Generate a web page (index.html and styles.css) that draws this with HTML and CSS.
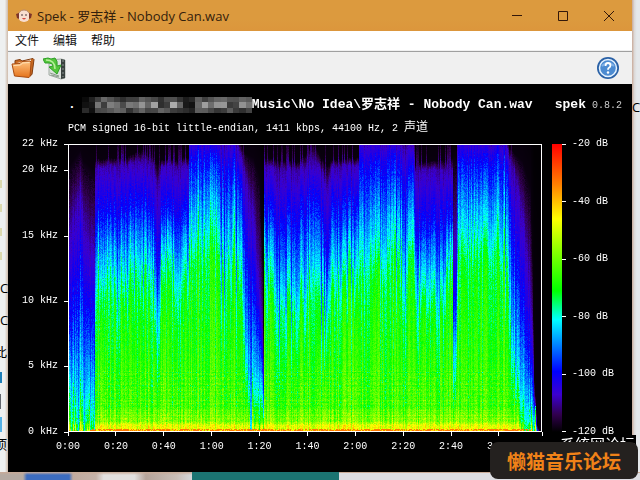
FILE: index.html
```html
<!DOCTYPE html>
<html lang="zh-CN">
<head>
    <meta charset="UTF-8">
    <meta name="viewport" content="width=device-width, initial-scale=1.0">
    <title>Spek - 罗志祥 - Nobody Can.wav</title>
    <link rel="stylesheet" href="styles.css">
</head>
<body>
    <!-- what shows from under the window -->
    <div class="behind behind-left" aria-hidden="true">
        <span class="bit bit-green"></span>
        <span class="bit bit-c">C</span>
        <span class="bit bit-c2">C</span>
        <span class="bit bit-ci">此</span>
        <span class="bit bit-blue"></span>
        <span class="bit bit-gray"></span>
        <span class="bit bit-sky"></span>
        <span class="bit bit-mu">项</span>
    </div>
    <div class="behind behind-right" aria-hidden="true"><span class="bit bit-c3">C</span></div>
    <div class="behind behind-bottom" aria-hidden="true">
        <span class="strip strip-brown"></span>
        <span class="strip strip-teal"></span>
        <span class="strip strip-light"></span>
    </div>

    <main class="window">
        <header class="titlebar">
            <svg class="app-icon" viewBox="0 0 16 16" aria-hidden="true">
                <circle cx="8" cy="8" r="6" fill="#f8ddd0"/>
                <path d="M2 8a6 6 0 0 1 12 0" fill="none" stroke="#b98a70" stroke-width="1"/>
                <path d="M0 6l3-1v6l-2-1zM16 6l-3-1v6l2-1z" fill="#7d3429"/>
                <path d="M6 6v2M10 6v2" stroke="#4a3840"/>
                <path d="M6 10q2 3 4 0z" fill="#d24b43"/>
            </svg>
            <h1>Spek - 罗志祥 - Nobody Can.wav</h1>
            <div class="controls">
                <button type="button" aria-label="最小化"><svg viewBox="0 0 12 12"><path d="M1 5.500h10"/></svg></button>
                <button type="button" aria-label="最大化"><svg viewBox="0 0 12 12"><path d="M1.500 1.500h9v9h-9z"/></svg></button>
                <button type="button" aria-label="关闭"><svg viewBox="0 0 12 12"><path d="M1 1l10 10M11 1L1 11"/></svg></button>
            </div>
        </header>

        <nav class="menubar">
            <button type="button">文件</button>
            <button type="button">编辑</button>
            <button type="button">帮助</button>
        </nav>

        <div class="toolbar">
            <button type="button" aria-label="打开">
                <svg viewBox="0 0 24 24">
                    <defs>
                        <linearGradient id="folder" x1="0" y1="0" x2="0" y2="1">
                            <stop offset="0" stop-color="#ffc481"/><stop offset="1" stop-color="#e4721b"/>
                        </linearGradient>
                    </defs>
                    <path d="M4 8V4.500l5-1 2 1.500 11-2.500 1 1-2 15-3 2z" fill="#c96a22" stroke="#803c10"/>
                    <path d="M6 7l14-3.500-1 10z" fill="#f7eee4"/>
                    <path d="M1 8l8-.5 2-2 8-.5 1 1-1 14.500-1 1-14.500-1.500z" fill="url(#folder)" stroke="#a94c11"/>
                    <path d="M2.500 9.500l7-.5 2-2 7-.5" fill="none" stroke="#ffe2b8"/>
                </svg>
            </button>
            <button type="button" aria-label="保存">
                <svg viewBox="0 0 24 24">
                    <path d="M6 4l12-1 4 1v18l-4 1-12-4z" fill="#dce2dd" stroke="#a2aba4"/>
                    <path d="M18 3l4 1v18l-4 1z" fill="#39413f"/>
                    <path d="M20 4v17" stroke="#8b9492" stroke-dasharray="2 2"/>
                    <path d="M7 17l9 3M8 19l8 2" stroke="#8a9b8c"/>
                    <path d="M0 3l5-1 3 1 4-1q3 3 2 8l4-1-4 9-8-7 4-1q0-3-4-3l-4 0z" fill="#54c63b" stroke="#2f9f28"/>
                    <path d="M3 4q9 0 9 9" fill="none" stroke="#b6ef99" stroke-width="1.500"/>
                </svg>
            </button>
            <button type="button" class="help" aria-label="帮助">
                <svg viewBox="0 0 24 24">
                    <circle cx="12" cy="12" r="11" fill="#2a61a6"/>
                    <circle cx="12" cy="12" r="8.500" fill="#4c8bd1" stroke="#e4f2ff" stroke-width="1.500"/>
                    <path d="M6 10q6-6 12 0" fill="none" stroke="#80b2e7" stroke-width="2"/>
                    <path d="M9.500 10q0-3 2.500-3t2.500 2.500q0 1.500-1.500 2.200-1 .5-1 2" fill="none" stroke="#fff" stroke-width="1.800"/>
                    <circle cx="12" cy="16.500" r="1.200" fill="#fff"/>
                </svg>
            </button>
        </div>

        <section class="spek">
            <div class="file">
                <h2><span>.</span><canvas id="mosaic" width="28" height="3"></canvas><span>Music\No Idea\罗志祥 - Nobody Can.wav</span></h2>
                <p class="version"><strong>spek</strong> 0.8.2</p>
            </div>
            <p class="info">PCM signed 16-bit little-endian, 1411 kbps, 44100 Hz, 2 <span>声道</span></p>

            <div class="chart">
                <ol class="freq">
                    <li>22 kHz</li><li>20 kHz</li><li>15 kHz</li><li>10 kHz</li><li>5 kHz</li><li>0 kHz</li>
                </ol>
                <div class="plot"><canvas id="spectrum" width="472" height="286"></canvas></div>
                <div class="scale"></div>
                <ol class="level">
                    <li>-20 dB</li><li>-40 dB</li><li>-60 dB</li><li>-80 dB</li><li>-100 dB</li><li>-120 dB</li>
                </ol>
                <ol class="time">
                    <li>0:00</li><li>0:20</li><li>0:40</li><li>1:00</li><li>1:20</li><li>1:40</li><li>2:00</li><li>2:20</li><li>2:40</li><li>3:00</li><li></li>
                </ol>
            </div>
        </section>
    </main>

    <div class="under-mark">系统网论坛</div>
    <div class="mark">懒猫音乐论坛</div>

    <script src="spectrum.js"></script>
</body>
</html>
```
FILE: styles.css
```css
* {
    box-sizing: border-box;
}

body {
    margin: 0;
    min-height: 100vh;
    padding: 0 8px 8px;
    display: flex;
    position: relative;
    overflow: hidden;
    background: #dfe1e6;
    font-family: "Open Sans", "Noto Sans CJK SC", sans-serif;
}

h1, h2, p, ol {
    margin: 0;
    padding: 0;
    font-weight: normal;
}

ol {
    list-style: none;
}

button {
    border: 0;
    padding: 0;
    background: none;
    font: inherit;
    color: inherit;
}

/* background windows */
.behind {
    position: absolute;
    overflow: hidden;
}

.behind-left {
    left: 0;
    top: 0;
    bottom: 8px;
    width: 8px;
    background: linear-gradient(90deg, #eef0f0 60%, #cdb9a8);
}

.behind-right {
    right: 0;
    top: 0;
    bottom: 0;
    width: 8px;
    background: linear-gradient(90deg, #c9aa99, #dcd9d8 30%, #e5e8eb 60%);
}

.behind-bottom {
    left: 0;
    right: 0;
    bottom: 0;
    height: 8px;
    display: flex;
}

.strip-brown {
    width: 30%;
    background: linear-gradient(#c9ab98, transparent 3px), linear-gradient(90deg, #b5aaa2 12%, #3c6cc0 14%, #3c6cc0 36%, #c0aa9f 38%, #c5b2a8 50%, #e2e0df 54%, #e2e0df 70%, #b5a49a 76%, #c9bdb6 92%, #d5d7da);
}

.strip-teal {
    width: 23%;
    background: #1b7472;
}

.strip-light {
    flex: 1;
    border-top: 1px solid #c9ab98;
    background: #dcdde2;
}

.bit {
    position: absolute;
    left: 0;
    font-size: 13px;
    line-height: 16px;
}

.bit-green { top: 180px; width: 2px; height: 90px; background: repeating-linear-gradient(#dcd9ae 0 8px, #eef0f0 8px 24px); }
.bit-c { top: 280px; }
.bit-c2 { top: 312px; }
.bit-c3 { top: 99px; }
.bit-ci { top: 344px; left: auto; right: 1px; }
.bit-mu { top: 436px; left: auto; right: 1px; }
.bit-blue { top: 372px; width: 2px; height: 11px; background: #1e7fb8; }
.bit-gray { top: 394px; width: 1px; height: 15px; background: #63676e; }
.bit-sky { top: 417px; width: 2px; height: 15px; background: #55b1e6; }

/* window */
.window {
    flex: 1;
    min-width: 0;
    display: flex;
    flex-direction: column;
    position: relative;
    background: #000;
}

.titlebar {
    height: 31px;
    padding-left: 8px;
    display: flex;
    align-items: center;
    gap: 5px;
    background: linear-gradient(#dc9a3e 60%, #dc963c);
    color: #33200c;
}

.app-icon {
    width: 16px;
    height: 16px;
}

.titlebar h1 {
    flex: 1;
    font-size: 13px;
    line-height: 16px;
}

.controls {
    display: flex;
}

.controls button {
    width: 46px;
    height: 30px;
    display: grid;
    place-items: center;
}

.controls svg {
    width: 12px;
    height: 12px;
    fill: none;
    stroke: #33180a;
}

.menubar {
    height: 20px;
    padding-left: 7px;
    display: flex;
    gap: 14px;
    background: #fff;
    border-bottom: 1px solid #f0f0f0;
    color: #111;
    font-size: 12px;
    line-height: 20px;
}

.toolbar {
    height: 33px;
    padding: 0 12px 0 3px;
    display: flex;
    align-items: center;
    gap: 8px;
    background: #f0f0f0;
    border-top: 1px solid #a0a0a0;
}

.toolbar button,
.toolbar svg {
    display: block;
    width: 24px;
    height: 24px;
}

.toolbar .help {
    margin-left: auto;
}

/* spectrogram */
.spek {
    flex: 1;
    display: flex;
    flex-direction: column;
    padding: 13px 0 16px;
    color: #fff;
    font-family: "Liberation Mono", "Noto Sans CJK SC", monospace;
    font-size: 10px;
    line-height: 16px;
}

.file {
    height: 16px;
    display: flex;
    justify-content: space-between;
    padding: 0 10px 0 60px;
    white-space: nowrap;
}

.file h2 {
    display: flex;
    font-size: 13px;
    font-weight: bold;
}

#mosaic {
    width: 176px;
    height: 16px;
    image-rendering: pixelated;
}

.version {
    color: #ccc;
}

.version strong {
    color: #fff;
    font-size: 13px;
}

.info {
    height: 16px;
    margin-top: 7px;
    padding-left: 60px;
}

.info span {
    font-size: 12px;
}

.chart {
    flex: 1;
    padding-top: 8px;
    display: grid;
    grid-template-columns: 60px 1fr 10px 10px 70px;
    grid-template-rows: minmax(0, 1fr) 24px;
}

.freq,
.level {
    display: grid;
}

.freq {
    grid-template-rows: 26fr 66fr 65fr 65fr 66fr 0;
}

.level {
    grid-template-rows: repeat(5, 1fr) 0;
}

.freq li,
.level li {
    height: 0;
    display: flex;
    align-items: center;
    gap: 6px;
}

.freq li {
    justify-content: flex-end;
}

.freq li::after,
.level li::before {
    content: "";
    width: 4px;
    height: 1px;
    background: #fff;
}

.plot {
    min-height: 0;
    display: grid;
    border: 1px solid #fff;
}

#spectrum {
    width: 100%;
    height: 0;
    min-height: 100%;
}

.scale {
    grid-column: 4;
    background: linear-gradient(#f00, #ff8000 14%, #ff0 26%, #80ff00 38%, #0f0 51%, #0ff 61%, #00f 79%, #3c00d0 87%, #30004c 94%, #000);
}

.time {
    grid-column: 2;
    display: grid;
    grid-template-columns: repeat(9, 20fr) 18fr 0;
}

.time li {
    width: 0;
    display: flex;
    flex-direction: column;
    align-items: center;
    gap: 3px;
}

.time li::before {
    content: "";
    width: 1px;
    height: 4px;
    background: #fff;
}

/* forum stamp */
.under-mark {
    position: absolute;
    right: 4px;
    bottom: 29px;
    width: 76px;
    height: 16px;
    overflow: hidden;
    background: #000;
    color: #fff;
    font-size: 15px;
    line-height: 18px;
    white-space: nowrap;
}

.mark {
    position: absolute;
    right: 2px;
    bottom: 1px;
    padding: 0 17px;
    border-radius: 8px;
    background: #24211f;
    color: #f08218;
    font-family: "Noto Sans CJK SC", sans-serif;
    font-size: 19px;
    font-weight: bold;
    line-height: 37px;
}
```
FILE: spectrum.js
```javascript
// x, then the heights at which the colour turns purple-black, purple, blue, cyan, green
const profile = [
    [0, 20, 90, 190, 245, 280],
    [7, 10, 60, 160, 240, 275],
    [11, 5, 40, 110, 215, 250],
    [14, 15, 70, 150, 235, 270],
    [25, 25, 110, 180, 245, 280],
    [26, 14, 22, 72, 122, 162],
    [55, 12, 20, 65, 115, 152],
    [73, 5, 16, 60, 115, 150],
    [84, 12, 22, 75, 125, 160],
    [88, 18, 42, 130, 170, 225],
    [92, 15, 22, 75, 115, 155],
    [119, 12, 20, 68, 112, 152],
    [120, -20, -8, 22, 87, 132],
    [150, -20, -8, 20, 80, 122],
    [167, -18, -5, 25, 90, 128],
    [172, 0, 12, 45, 105, 150],
    [176, 8, 30, 110, 215, 250],
    [184, 12, 65, 150, 235, 265],
    [190, 30, 140, 190, 245, 275],
    [193, 110, 190, 230, 270, 284],
    [194, 180, 220, 245, 275, 284],
    [195, 13, 22, 72, 122, 162],
    [230, 15, 22, 68, 122, 160],
    [244, -2, 15, 50, 115, 152],
    [252, 12, 22, 65, 118, 155],
    [258, 20, 45, 135, 180, 220],
    [262, 15, 22, 68, 122, 162],
    [289, 12, 20, 65, 116, 155],
    [290, -20, -8, 20, 85, 130],
    [309, -20, -8, 25, 90, 130],
    [320, -20, -8, 15, 75, 120],
    [344, -10, 0, 35, 90, 130],
    [346, 18, 26, 90, 130, 168],
    [368, 14, 22, 72, 120, 162],
    [383, 14, 28, 85, 125, 160],
    [384, 10, 90, 160, 215, 260],
    [387, 10, 90, 160, 215, 255],
    [388, -20, -8, 20, 85, 128],
    [410, -20, -8, 20, 75, 120],
    [436, -15, -5, 20, 85, 125],
    [440, 0, 10, 40, 105, 155],
    [445, 8, 26, 110, 215, 250],
    [453, 15, 65, 160, 235, 265],
    [461, 40, 140, 210, 255, 275],
    [463, 110, 180, 230, 265, 280],
    [465, 235, 250, 262, 276, 284],
    [468, 280, 285, 290, 295, 300],
    [472, 290, 295, 300, 305, 310]
];

const palette = [
    [0, 0, 0, 0],
    [0.08, 48, 0, 76],
    [0.16, 60, 0, 205],
    [0.25, 0, 0, 255],
    [0.42, 0, 255, 255],
    [0.5, 0, 255, 0],
    [0.62, 128, 255, 0],
    [0.74, 255, 255, 0],
    [0.87, 255, 128, 0],
    [1, 255, 0, 0]
];

let seed = 82;
function random() {
    seed = (seed * 1664525 + 1013904223) >>> 0;
    return seed / 4294967296;
}

// linear interpolation of a row from a table sorted by its first value
function lookup(table, at) {
    let i = 1;
    while (i < table.length - 1 && table[i][0] < at) i++;
    const a = table[i - 1];
    const b = table[i];
    const t = Math.min(1, Math.max(0, (at - a[0]) / (b[0] - a[0])));
    return a.map((value, n) => value + (b[n] - value) * t);
}

function drawSpectrum(canvas) {
    const ctx = canvas.getContext('2d');
    const { width, height } = canvas;
    const image = ctx.createImageData(width, height);
    const bands = Array.from({ length: height }, () => random() - 0.5);
    let slow = 0;

    for (let x = 0; x < width; x++) {
        const row = lookup(profile, x);
        slow = slow * 0.75 + (random() - 0.5) * 22;
        let shift = slow + (random() - 0.5) * 28;
        if (random() < 0.08) shift += 45;
        const bright = (random() - 0.5) * 0.11;
        const tail = row[5] > 200;
        // a few columns reach above the 20 kHz shelf
        const spike = !tail && random() < 0.3 ? 14 : 0;
        const curve = [
            [-60, 0],
            [row[1] - spike + (tail ? 0 : shift * 0.05), spike ? 0.05 : 0.015],
            [row[2] + shift * 0.1, 0.14],
            [row[3] + shift * 0.5, 0.25],
            [row[4] + shift, 0.39],
            [row[5] + shift, 0.49],
            [Math.max(262, row[5] + shift + 10), 0.56],
            [Math.max(276, row[5] + shift + 12), 0.64],
            [Math.max(286, row[5] + shift + 18), 0.78]
        ];
        for (let y = 0; y < height; y++) {
            let level = lookup(curve, y)[1];
            if (level > 0.03) {
                level += (random() - 0.5) * (level > 0.2 ? 0.06 : 0.03);
                level += bright * Math.min(1, level * 2.5);
                if (level > 0.45 && y > 225) level += bands[y] * 0.05 + (random() - 0.5) * 0.06;
            }
            if (y > height - 3 && x < 464 && x > 20 && random() < 0.6) level = 0.88;
            const [, r, g, b] = lookup(palette, level);
            image.data.set([r, g, b, 255], (y * width + x) * 4);
        }
    }
    ctx.putImageData(image, 0, 0);
}

// pixelated part of the path
function drawMosaic(canvas) {
    const ctx = canvas.getContext('2d');
    for (let x = 1; x < canvas.width; x++) {
        for (let y = 0; y < canvas.height; y++) {
            const gap = x < 3 || (x > 16 && x < 19);
            const gray = Math.round(gap ? 10 + random() * 35 : 45 + random() * (y === 1 ? 140 : 60));
            ctx.fillStyle = `rgb(${gray}, ${gray}, ${gray})`;
            ctx.fillRect(x, y, 1, 1);
        }
    }
}

drawSpectrum(document.getElementById('spectrum'));
drawMosaic(document.getElementById('mosaic'));
```
